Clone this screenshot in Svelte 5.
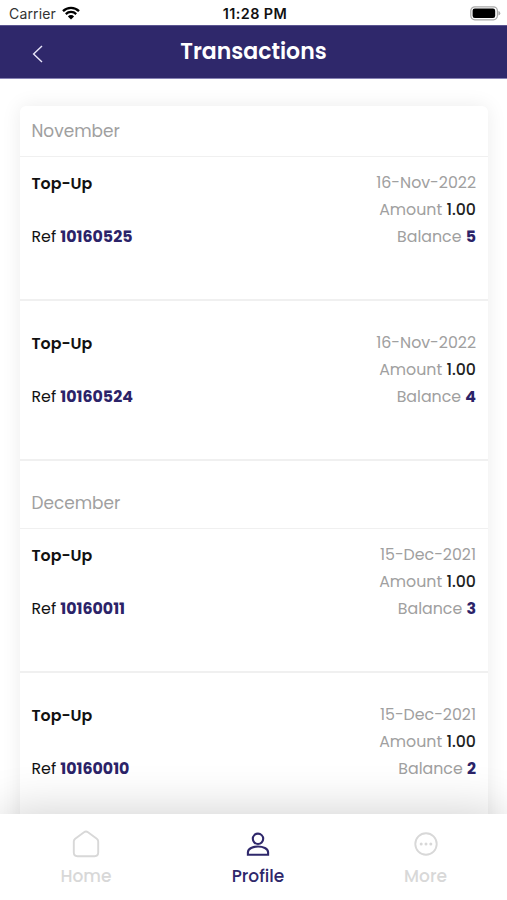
<script lang="ts">
  interface Transaction {
    ref: string;
    type: string;
    date: string;
    amount: string;
    balance: number;
  }

  interface MonthGroup {
    month: string;
    items: Transaction[];
  }

  const groups: MonthGroup[] = [
    {
      month: 'November',
      items: [
        { ref: '10160525', type: 'Top-Up', date: '16-Nov-2022', amount: '1.00', balance: 5 },
        { ref: '10160524', type: 'Top-Up', date: '16-Nov-2022', amount: '1.00', balance: 4 },
      ],
    },
    {
      month: 'December',
      items: [
        { ref: '10160011', type: 'Top-Up', date: '15-Dec-2021', amount: '1.00', balance: 3 },
        { ref: '10160010', type: 'Top-Up', date: '15-Dec-2021', amount: '1.00', balance: 2 },
      ],
    },
  ];

  let activeTab = 'profile';
</script>

<div class="screen">
  <div class="statusBar">
    <div class="carrier">
      <span>Carrier</span>
      <svg width="18" height="14" viewBox="0 0 18 14">
        <path d="M1 5.1a11.3 11.3 0 0 1 16 0" fill="none" stroke="#000" stroke-width="2.3" />
        <path d="M3.8 8.1a7.4 7.4 0 0 1 10.4 0" fill="none" stroke="#000" stroke-width="2.2" />
        <path d="M9 13.6 5.9 10.4a4.4 4.4 0 0 1 6.2 0z" />
      </svg>
    </div>
    <span class="time">11:28 PM</span>
    <div class="power">
      <svg width="31" height="15" viewBox="0 0 31 15">
        <rect x="0.8" y="0.8" width="26.6" height="13" rx="4" fill="#fff" stroke="#a9a9a9" stroke-width="1.2" />
        <rect x="2.6" y="2.6" width="22.6" height="9.4" rx="2.2" />
        <path d="M28.4 5v4.6q1.9-.6 1.9-2.3t-1.9-2.3z" fill="#a9a9a9" />
      </svg>
    </div>
  </div>

  <header class="pageHeader">
    <button class="backBtn" aria-label="Back">
      <svg width="12" height="18" viewBox="0 0 12 18">
        <path d="M10 1 1.6 9l8.4 8" fill="none" stroke="#e9e6fa" stroke-width="1.4" />
      </svg>
    </button>
    <h1>Transactions</h1>
  </header>

  <main class="content">
    <div class="card">
      {#each groups as group}
        <section class="group">
          <h2 class="month">{group.month}</h2>
          {#each group.items as item}
            <div class="row">
              <div class="info">
                <strong class="type">{item.type}</strong>
                <div class="ref">Ref <strong>{item.ref}</strong></div>
              </div>
              <div class="details">
                <div class="date">{item.date}</div>
                <div class="amount">Amount <b>{item.amount}</b></div>
                <div class="balance">Balance <strong>{item.balance}</strong></div>
              </div>
            </div>
          {/each}
        </section>
      {/each}
    </div>
  </main>

  <nav class="tabBar">
    <button class="tab" class:active={activeTab === 'home'} on:click={() => (activeTab = 'home')}>
      <svg width="30" height="30" viewBox="0 0 30 30">
        <path
          d="M13 3.2 4.2 9.8Q2.8 10.9 2.8 12.6v11q0 3.6 3.6 3.6h17.2q3.6 0 3.6-3.6v-11q0-1.7-1.4-2.8L17 3.2q-2-1.4-4 0z"
          fill="none" stroke="currentColor" stroke-width="1.9" />
      </svg>
      <span>Home</span>
    </button>
    <button class="tab" class:active={activeTab === 'profile'} on:click={() => (activeTab = 'profile')}>
      <svg width="30" height="30" viewBox="0 0 30 30" fill="none" stroke="currentColor" stroke-width="2.1">
        <circle cx="15" cy="9.8" r="5.2" />
        <path d="M4.9 25.8v-2.6c0-3.7 5.2-5.7 10.1-5.7s10.1 2 10.1 5.7v2.6z" />
      </svg>
      <span>Profile</span>
    </button>
    <button class="tab" class:active={activeTab === 'more'} on:click={() => (activeTab = 'more')}>
      <svg width="30" height="30" viewBox="0 0 30 30">
        <circle cx="15" cy="15" r="10.7" fill="none" stroke="currentColor" stroke-width="1.9" />
        <circle cx="10.2" cy="15" r="1.5" fill="currentColor" />
        <circle cx="15" cy="15" r="1.5" fill="currentColor" />
        <circle cx="19.8" cy="15" r="1.5" fill="currentColor" />
      </svg>
      <span>More</span>
    </button>
  </nav>
</div>

<style>
  :global(body) {
    margin: 0;
    background: #fff;
  }

  .screen {
    display: flex;
    flex-direction: column;
    height: 900px;
    overflow: hidden;
    background: #fff;
    font-family: Poppins, Inter, sans-serif;
    font-size: 15.8px;
    color: #111;
  }

  button {
    padding: 0;
    border: 0;
    background: none;
    font: inherit;
    color: inherit;
  }

  svg {
    display: block;
  }

  .statusBar {
    display: grid;
    grid-template-columns: 1fr auto 1fr;
    align-items: center;
    flex: none;
    box-sizing: border-box;
    height: 25px;
    padding: 2px 6px 0 9px;
    font-family: Inter, sans-serif;
    font-size: 14px;
  }

  .carrier {
    display: flex;
    align-items: center;
    gap: 6px;
    letter-spacing: 0.15px;
    color: #333;
  }

  .carrier svg {
    margin-top: -2px;
  }

  .time {
    font-size: 14.4px;
    font-weight: 600;
    letter-spacing: 0.4px;
    color: #111;
  }

  .power {
    display: flex;
    justify-content: flex-end;
    padding-bottom: 1px;
  }

  .pageHeader {
    display: grid;
    grid-template-columns: 75px 1fr 75px;
    align-items: center;
    flex: none;
    box-sizing: border-box;
    height: 54px;
    border-top: 1px solid #5b5590;
    border-bottom: 1px solid #8782b4;
    background: #2f286b;
  }

  .backBtn {
    display: flex;
    justify-content: center;
    padding-top: 3px;
  }

  h1 {
    margin: 0;
    font-size: 22px;
    line-height: 50px;
    font-weight: 600;
    text-align: center;
    color: #fff;
  }

  .content {
    flex: 1;
    min-height: 0;
    overflow: hidden;
    padding: 27px 19px 0 20px;
  }

  .card {
    border-radius: 6px;
    background: #fff;
    box-shadow: 0 0 20px rgba(0, 0, 0, 0.08);
  }

  .month {
    box-sizing: border-box;
    height: 51px;
    margin: 0;
    padding: 0 11.5px;
    border-bottom: 1px solid #f0f0f0;
    font-size: 16.9px;
    line-height: 51px;
    font-weight: 400;
    color: #a0a0a0;
  }

  .group + .group .month {
    height: 68.5px;
    padding-top: 17.5px;
  }

  .row {
    display: flex;
    justify-content: space-between;
    box-sizing: border-box;
    height: 143.5px;
    padding: 12px 12px 0 11.5px;
    border-bottom: 2px solid #f0f0f0;
    line-height: 27px;
  }

  .row + .row {
    height: 160px;
    padding-top: 28.5px;
  }

  .info {
    display: flex;
    flex-direction: column;
    gap: 26px;
    padding-top: 1px;
    color: #111;
  }

  .info strong,
  .balance strong {
    font-weight: 700;
  }

  .info .type {
    font-weight: 600;
  }

  .ref strong,
  .balance strong {
    color: #2b2368;
  }

  .details {
    text-align: right;
    color: #a0a0a0;
  }

  .amount b {
    font-weight: 500;
    color: #222;
  }

  .tabBar {
    position: relative;
    display: grid;
    grid-template-columns: 172px 172px 163px;
    flex: none;
    height: 86px;
    background: #fff;
    box-shadow: 0 0 50px rgba(0, 0, 0, 0.2);
  }

  .tab {
    display: flex;
    flex-direction: column;
    align-items: center;
    padding-top: 15px;
    line-height: 34px;
    font-size: 17px;
    font-weight: 500;
    color: #d8d8d8;
  }

  .tab.active {
    color: #2f286b;
  }
</style>
